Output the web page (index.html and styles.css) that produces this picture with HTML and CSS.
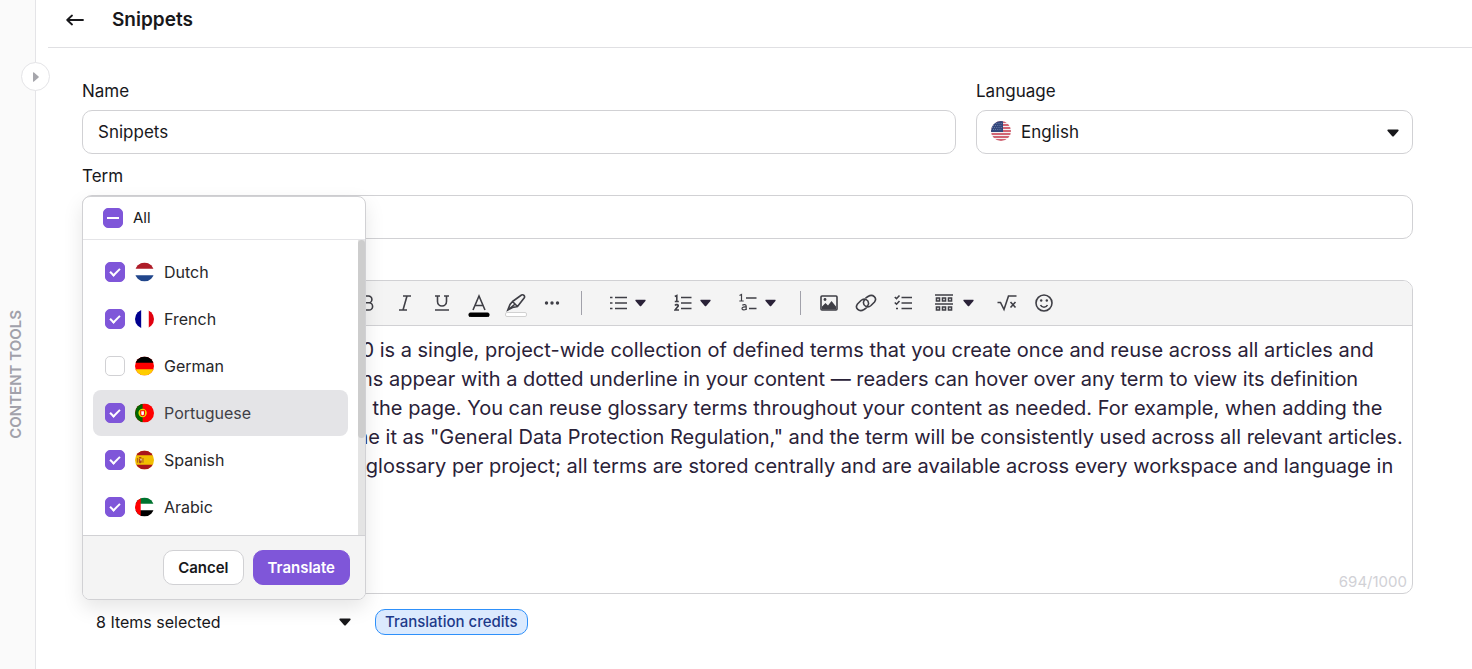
FILE: index.html
```
<!DOCTYPE html>
<html lang="en">
<head>
  <meta charset="UTF-8">
  <meta name="viewport" content="width=device-width, initial-scale=1.0">
  <title>Snippets</title>
  <link rel="stylesheet" href="styles.css">
</head>
<body>
  <!-- shared shapes -->
  <svg class="defs" aria-hidden="true">
    <symbol id="caret" viewBox="0 0 12 8"><path d="M1.2.5h9.6c.8 0 1.1.8.6 1.4L7 6.9a1.3 1.3 0 0 1-2 0L.6 1.9C.1 1.3.4.5 1.2.5z" fill="currentColor"/></symbol>
    <clipPath id="round"><circle cx="10" cy="10" r="10"/></clipPath>
  </svg>

  <aside class="sidebar">
    <span class="sidebar-title">CONTENT TOOLS</span>
    <button class="expand" aria-label="Expand content tools">
      <svg width="8" height="10" viewBox="0 0 8 10"><path d="M1 .8v8.4c0 .6.6.8 1 .4l4.6-4c.4-.3.4-.9 0-1.2L2 .4C1.600 0 1 .2 1 .8z" fill="#a6a6ac"/></svg>
    </button>
  </aside>

  <main class="main">
    <header class="header">
      <button class="back" aria-label="Back">
        <svg width="18" height="14" viewBox="0 0 18 14" fill="none" stroke="currentColor" stroke-width="1.800" stroke-linecap="round" stroke-linejoin="round"><path d="M17 7H1.500M6 2.500 1.200 7 6 11.500"/></svg>
      </button>
      <h1>Snippets</h1>
    </header>

    <form class="form">
      <div class="row">
        <div class="field">
          <label for="name">Name</label>
          <input id="name" class="box" type="text" value="Snippets">
        </div>
        <div class="field">
          <label for="language">Language</label>
          <div class="select">
            <select id="language" class="box">
              <option>English</option>
            </select>
            <svg class="flag" width="20" height="20" viewBox="0 0 20 20"><g clip-path="url(#round)"><path fill="#f4f0f1" d="M0 0h20v20H0z"/><path stroke="#c5364a" stroke-width="1.500" d="M0 1h20M0 4h20M0 7h20M0 10h20M0 13h20M0 16h20M0 19h20"/><path fill="#33477c" d="M0 0h12v11H0z"/><path stroke="#8c9abd" stroke-width=".8" stroke-dasharray=".8 1.400" d="M1 2.500h10M2 4.500h9M1 6.500h10M2 8.500h9"/></g></svg>
            <svg class="arrow" width="12" height="8"><use href="#caret"/></svg>
          </div>
        </div>
      </div>

      <div class="field">
        <label for="term">Term</label>
        <input id="term" class="box" type="text">
      </div>

      <div class="field last">
        <label id="definition">Definition</label>
        <div class="editor">
          <div class="toolbar">
            <button type="button" class="tool" aria-label="Bold"><svg width="18" height="20" viewBox="0 0 18 20"><path d="M5 3h4.500a3.400 3.400 0 0 1 0 6.800H5zM5 9.800h5a3.600 3.600 0 0 1 0 7.200H5z"/></svg></button>
            <button type="button" class="tool" aria-label="Italic"><svg width="18" height="20" viewBox="0 0 18 20"><path d="M7 3h8M3 17h8M11 3 7 17"/></svg></button>
            <button type="button" class="tool" aria-label="Underline"><svg width="18" height="20" viewBox="0 0 18 20"><path d="M2 3h5M11 3h5M4.500 3v5.500a4.500 4.500 0 0 0 9 0V3M2 17h14"/></svg></button>
            <button type="button" class="tool" aria-label="Text color"><svg width="22" height="28" viewBox="0 0 22 28"><path d="M5 21 11 7l6 14M7.200 16.500h7.600"/><rect x="1" y="24" width="20" height="3.600" rx="1.200" fill="#000" stroke="#000" stroke-width="1"/></svg></button>
            <button type="button" class="tool" aria-label="Highlight"><svg width="22" height="28" viewBox="0 0 22 28"><path d="m7.500 12.500 9-6.500c1.800-1 3.800 1 2.800 2.800l-6.800 8.700-5 1-4.700 2.500L5 15.500zM7.500 12.500l5 5M3 21l6.500-5.500"/><rect x=".5" y="23.500" width="21" height="4" rx="1.500" fill="#fff" stroke="#d1d1d1" stroke-width="1"/></svg></button>
            <button type="button" class="tool" aria-label="More"><svg width="18" height="20" viewBox="0 0 18 20"><g class="fill"><circle cx="2.500" cy="10" r="1.700"/><circle cx="8" cy="10" r="1.700"/><circle cx="13.500" cy="10" r="1.700"/></g></svg></button>
            <span class="divider"></span>
            <div class="group">
              <button type="button" class="tool menu" aria-label="Bulleted list"><svg width="18" height="20" viewBox="0 0 18 20"><path d="M6 4.500H18M6 10H18M6 15.500H18M1 4.500H3.500M1 10H3.500M1 15.500H3.500"/></svg><svg class="caret" width="11" height="8"><use href="#caret"/></svg></button>
              <button type="button" class="tool menu" aria-label="Numbered list"><svg width="18" height="20" viewBox="0 0 18 20"><path d="M7 4.500h10.500M7 10h10.500M7 15.500h10.500M.8 3.500 2.800 2.500v6M.8 8.500h4M1 12.500c1-1.500 3.600-1 3.200.600L1 17h4"/></svg><svg class="caret" width="11" height="8"><use href="#caret"/></svg></button>
              <button type="button" class="tool menu" aria-label="Multilevel list"><svg width="18" height="20" viewBox="0 0 18 20"><path d="M7 5h10.500M10 15.500h7.500"/><path class="thin" d="M.5 2.500 2.500 1.500V8M.3 8h4.400M3.300 12.200c1.500-1 3.900-.8 3.900 1V17M7.200 14c-2-.2-4.200 0-4.200 1.600 0 1.800 2.900 1.700 4.200.2"/></svg><svg class="caret" width="11" height="8"><use href="#caret"/></svg></button>
            </div>
            <span class="divider"></span>
            <button type="button" class="tool" aria-label="Image"><svg width="18" height="20" viewBox="0 0 18 20"><rect x="1" y="3" width="16" height="14" rx="1"/><path class="fill" d="M2 16.500V13.500l3.500-3.500 2.500 2.500L11.500 8l4.500 5.500v3z"/><circle class="fill" cx="5" cy="6.500" r="1.400"/></svg></button>
            <button type="button" class="tool" aria-label="Link"><svg width="22" height="20" viewBox="0 0 22 20"><path d="M11.500 14.800 9 16.500c-5 3-9.500-1.500-6.500-5.500L6 7.500c3.500-3 8-.5 7.500 3.500-.2 1.500-1.500 2.500-2.500 3M10.500 5.200 13 3.500c5-3 9.500 1.500 6.500 5.500L16 12.500c-3.500 3-8 .5-7.500-3.500.2-1.500 1.500-2.500 2.500-3"/></svg></button>
            <button type="button" class="tool" aria-label="Checklist"><svg width="18" height="20" viewBox="0 0 18 20"><path d="M7.500 4.500H18M7.500 10H18M7.500 15.500H18M.8 4l1.700 1.700L5.500 2.500M.8 9.500l1.700 1.700L5.500 8M2 15.500h2"/></svg></button>
            <button type="button" class="tool menu wide" aria-label="Table"><svg width="18" height="20" viewBox="0 0 18 20"><path d="M0 2h18M0 11h18"/><path d="M1.500 5h3v3h-3zM7.500 5h3v3h-3zM13.500 5h3v3h-3zM1.500 14h3v3h-3zM7.500 14h3v3h-3zM13.500 14h3v3h-3z"/></svg><svg class="caret" width="11" height="8"><use href="#caret"/></svg></button>
            <button type="button" class="tool" aria-label="Formula"><svg width="20" height="20" viewBox="0 0 20 20"><path d="M.5 9.500h3L7 16.500l4.500-13.500H19.500M13.500 9l5 5.500M18.500 9l-5 5.500"/></svg></button>
            <button type="button" class="tool" aria-label="Emoji"><svg width="18" height="20" viewBox="0 0 18 20"><circle cx="9" cy="10" r="8"/><path d="M5.500 12c1.500 3 5.500 3 7 0"/><circle class="fill" cx="6.200" cy="7.500" r="1.200"/><circle class="fill" cx="11.800" cy="7.500" r="1.200"/></svg></button>
          </div>
          <div class="content" contenteditable="true" role="textbox" aria-labelledby="definition" spellcheck="false">The glossary in Document360 is a single, project-wide collection of defined terms that you create once and reuse across all articles and workspaces. Its glossary terms appear with a dotted underline in your content — readers can hover over any term to view its definition without leaving their place on the page. You can reuse glossary terms throughout your content as needed. For example, when adding the term "GDPR," you might define it as "General Data Protection Regulation," and the term will be consistently used across all relevant articles. There is always only a single glossary per project; all terms are stored centrally and are available across every workspace and language in the project.</div>
          <span class="count">694/1000</span>
        </div>
      </div>

      <div class="footer">
        <div class="picker">
          <button type="button" class="picker-button" aria-haspopup="true" aria-expanded="true">8 Items selected <svg width="12" height="8"><use href="#caret"/></svg></button>
          <div class="popup">
            <label class="all"><input class="check some" type="checkbox">All</label>
            <div class="scroll">
              <div class="list">
                <label class="item"><input class="check" type="checkbox" checked>
                  <svg width="19" height="20" viewBox="0 0 20 20"><g clip-path="url(#round)"><path fill="#fff" d="M0 0h20v20H0z"/><path fill="#ae1c28" d="M0 0h20v6.500H0z"/><path fill="#21468b" d="M0 13.500h20V20H0z"/></g></svg>Dutch</label>
                <label class="item"><input class="check" type="checkbox" checked>
                  <svg width="19" height="20" viewBox="0 0 20 20"><g clip-path="url(#round)"><path fill="#fff" d="M0 0h20v20H0z"/><path fill="#00008f" d="M0 0h6.500v20H0z"/><path fill="#e1000f" d="M14.500 0H20v20h-5.500z"/></g></svg>French</label>
                <label class="item"><input class="check" type="checkbox">
                  <svg width="19" height="20" viewBox="0 0 20 20"><g clip-path="url(#round)"><path fill="#f00" d="M0 0h20v20H0z"/><path fill="#000" d="M0 0h20v6.500H0z"/><path fill="#fc0" d="M0 13.500h20V20H0z"/></g></svg>German</label>
                <label class="item active"><input class="check" type="checkbox" checked>
                  <svg width="19" height="20" viewBox="0 0 20 20"><g clip-path="url(#round)"><path fill="#f00" d="M0 0h20v20H0z"/><path fill="#060" d="M0 0h8v20H0z"/><circle cx="8" cy="10" r="3.800" fill="#e8d800" stroke="#e8d800" stroke-width="1.200"/><path fill="#f00" d="M5.500 7.200h5V11a2.500 2.500 0 0 1-5 0z"/><path fill="#fff" d="M6.600 8.200h2.800v2.800a1.400 1.400 0 0 1-2.800 0z"/></g></svg>Portuguese</label>
                <label class="item"><input class="check" type="checkbox" checked>
                  <svg width="19" height="20" viewBox="0 0 20 20"><g clip-path="url(#round)"><path fill="#f1bf00" d="M0 0h20v20H0z"/><path fill="#aa151b" d="M0 0h20v5H0zM0 15h20v5H0z"/><path fill="#b5651d" d="M2 8h1.200v5H2zM7.800 8H9v5H7.800z"/><path fill="#ad4519" d="M4 8.500h3V12a1.500 1.500 0 0 1-3 0zM4.300 6.800h2.400v1.100H4.300z"/><path fill="#e8d8c8" d="M5.500 9H7v1.500H5.500z"/></g></svg>Spanish</label>
                <label class="item"><input class="check" type="checkbox" checked>
                  <svg width="19" height="20" viewBox="0 0 20 20"><g clip-path="url(#round)"><path fill="#fff" d="M0 0h20v20H0z"/><path fill="#00732f" d="M0 0h20v6.500H0z"/><path fill="#000" d="M0 13.500h20V20H0z"/><path fill="#f00" d="M0 0h6v20H0z"/></g></svg>Arabic</label>
              </div>
              <div class="track"><div class="thumb"></div></div>
            </div>
            <div class="actions">
              <button type="button" class="btn">Cancel</button>
              <button type="button" class="btn primary">Translate</button>
            </div>
          </div>
        </div>
        <span class="badge">Translation credits</span>
      </div>
    </form>
  </main>
</body>
</html>
```
FILE: styles.css
```
* {
  box-sizing: border-box;
}

body {
  margin: 0;
  display: flex;
  min-height: 100vh;
  background: #fff;
  color: #18181b;
  font-family: Inter, sans-serif;
  font-size: 17px;
  line-height: 20px;
}

button,
input,
select {
  font: inherit;
  color: inherit;
  margin: 0;
}

button {
  padding: 0;
  border: none;
  background: none;
  cursor: pointer;
}

svg {
  display: block;
  flex-shrink: 0;
}

.defs {
  position: absolute;
  width: 0;
  height: 0;
}

/* left rail */
.sidebar {
  position: relative;
  flex: 0 0 36px;
  display: flex;
  align-items: center;
  justify-content: center;
  padding: 80px 4px 0 0;
  background: #fafafa;
  border-right: 1px solid #e4e4e7;
}

.sidebar-title {
  writing-mode: vertical-rl;
  transform: rotate(180deg);
  font-size: 15px;
  font-weight: 600;
  color: #a1a1aa;
}

.expand {
  position: absolute;
  top: 62px;
  right: -15px;
  width: 29px;
  height: 29px;
  display: flex;
  align-items: center;
  justify-content: center;
  border: 1px solid #e4e4e7;
  border-radius: 50%;
  background: #fff;
}

.main {
  flex: 1;
  min-width: 0;
  padding-left: 12px;
}

.header {
  display: flex;
  align-items: center;
  gap: 28px;
  height: 48px;
  padding: 0 18px 8px;
  border-bottom: 1px solid #e0e0e3;
}

.header h1 {
  margin: 0;
  font-size: 19px;
  font-weight: 600;
}

.form {
  padding: 33px 59px 0 34px;
}

.row {
  display: grid;
  grid-template-columns: 2fr 1fr;
  gap: 20px;
}

.field {
  margin-bottom: 12px;
}

.field.last {
  margin-bottom: 6px;
}

.field > label {
  display: block;
  margin-bottom: 9px;
}

.box {
  display: block;
  width: 100%;
  height: 44px;
  padding: 0 15px;
  border: 1px solid #d1d1d4;
  border-radius: 10px;
  background: #fff;
}

.select {
  position: relative;
}

.select .box {
  appearance: none;
  padding-left: 44px;
}

.flag {
  position: absolute;
  top: 11px;
  left: 15px;
}

.arrow {
  position: absolute;
  top: 19px;
  right: 14px;
}

/* rich text editor */
.editor {
  display: flex;
  flex-direction: column;
  height: 314px;
  border: 1px solid #d1d1d4;
  border-radius: 10px;
  overflow: hidden;
}

.toolbar {
  display: flex;
  align-items: center;
  flex-shrink: 0;
  height: 45px;
  padding-left: 266px;
  background: #f4f4f4;
  border-bottom: 1px solid #d1d1d4;
}

.tool {
  flex: 0 0 37px;
  height: 36px;
  display: flex;
  align-items: center;
  justify-content: center;
}

.tool svg {
  fill: none;
  stroke: #3f3f46;
  stroke-width: 1.6px;
}

.tool .fill {
  fill: #3f3f46;
  stroke: none;
}

.tool .thin {
  stroke-width: 1.2px;
}

.tool .caret {
  color: #2a2238;
  stroke: none;
}

.menu {
  flex-basis: 65px;
  gap: 8px;
}

.menu.wide {
  flex-basis: 67px;
  gap: 10px;
}

.group {
  display: flex;
  padding-left: 4px;
}

.divider {
  width: 1px;
  height: 24px;
  margin: 0 9px 0 10px;
  background: #a1a1aa;
}

.content {
  flex: 1;
  padding: 10px 0 0 6px;
  font-size: 20px;
  line-height: 29px;
  color: #2a2238;
  outline: none;
}

.count {
  align-self: flex-end;
  padding: 0 5px 1px;
  font-size: 15px;
  color: #d1d1d6;
}

.footer {
  display: flex;
  align-items: center;
  gap: 9px;
}

.picker {
  position: relative;
  width: 284px;
}

.picker-button {
  display: flex;
  align-items: center;
  justify-content: space-between;
  width: 100%;
  height: 44px;
  padding: 0 15px 0 14px;
  font-size: 16px;
}

.popup {
  position: absolute;
  bottom: 100%;
  left: 0;
  width: 100%;
  border: 1px solid #d1d1d4;
  border-radius: 8px;
  background: #fff;
  box-shadow: 0 8px 20px rgba(0, 0, 0, 0.1);
  overflow: hidden;
}

.all {
  display: flex;
  align-items: center;
  gap: 10px;
  height: 43px;
  padding-left: 20px;
  border-bottom: 1px solid #e4e4e7;
  font-size: 15px;
}

.scroll {
  display: flex;
  height: 295px;
}

.list {
  flex: 1;
  display: flex;
  flex-direction: column;
  gap: 1px;
  padding: 9px 10px 0;
  overflow: hidden;
}

.item {
  display: flex;
  align-items: center;
  gap: 10px;
  flex: 0 0 46px;
  padding-left: 12px;
  border-radius: 8px;
  font-size: 16px;
  color: #27272a;
}

.item.active {
  background: #e4e4e7;
  color: #3f3f46;
}

.check {
  appearance: none;
  display: grid;
  place-items: center;
  width: 20px;
  height: 20px;
  border: 1px solid #d1d1d4;
  border-radius: 5px;
  background: #fff;
}

.check:checked,
.check.some {
  background: #7f56d9;
  border-color: #7f56d9;
}

.check:checked::before {
  content: '';
  width: 4px;
  height: 8px;
  margin-top: -2px;
  border: solid #fff;
  border-width: 0 2px 2px 0;
  transform: rotate(45deg);
}

.check.some::before {
  content: '';
  width: 12px;
  height: 2px;
  background: #fff;
}

.track {
  width: 7px;
  background: #e4e4e4;
}

.thumb {
  height: 198px;
  border-radius: 4px;
  background: #cdcdcd;
}

.actions {
  display: flex;
  justify-content: flex-end;
  gap: 9px;
  padding: 14px 15px;
  background: #f4f4f4;
  border-top: 1px solid #d1d1d4;
}

.btn {
  height: 35px;
  padding: 0 14px;
  border: 1px solid #d1d1d4;
  border-radius: 10px;
  background: #fff;
  font-size: 15px;
  font-weight: 600;
}

.btn.primary {
  background: #7f56d9;
  border-color: #7f56d9;
  color: #fff;
}

.badge {
  padding: 1px 9px;
  border: 1px solid #2e90fa;
  border-radius: 10px;
  background: #dbeafe;
  color: #1e3a8a;
  font-size: 15px;
  font-weight: 500;
  line-height: 22px;
}
```
